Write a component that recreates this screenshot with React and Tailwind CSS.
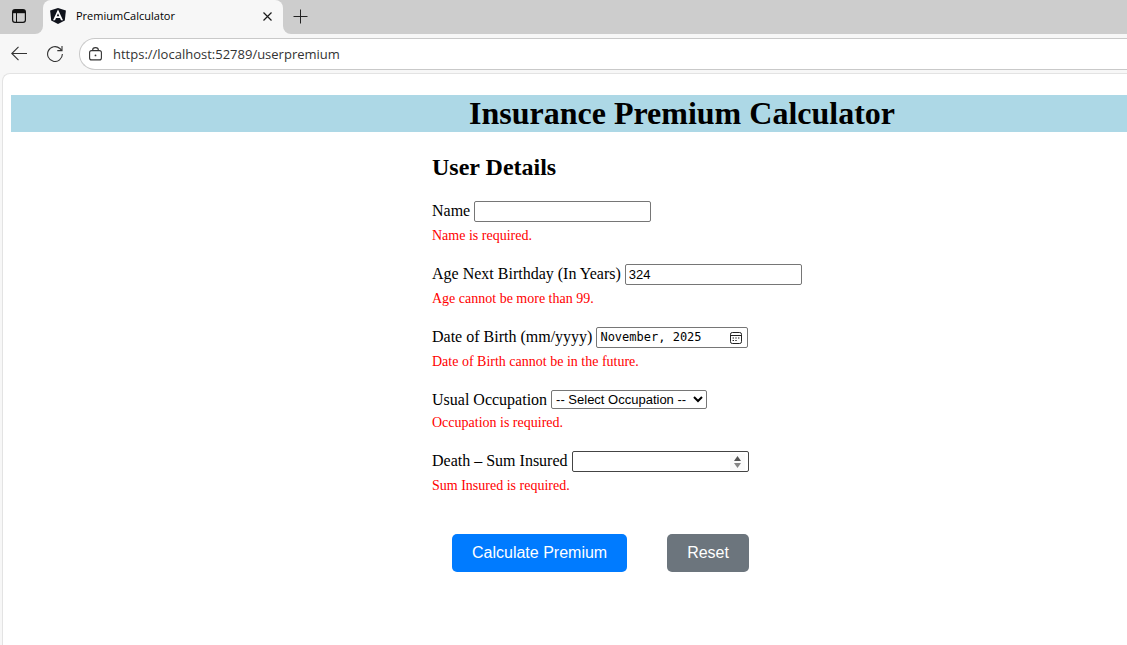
import React from "react";

const inputBase =
  "h-[21px] w-[177px] rounded-[2px] border border-[#767676] bg-white px-[3px] font-['Liberation_Sans',Arial,sans-serif] text-[13px] leading-[15px] text-black outline-none";

function Field({ id, label, error, children }) {
  return (
    <div className="mb-5">
      <div className="flex items-start gap-1">
        <label htmlFor={id} className="text-base leading-[19px] whitespace-nowrap">
          {label}
        </label>
        {children}
      </div>
      <p className="mt-[5px] text-sm leading-[17px] text-[#ff0000]">{error}</p>
    </div>
  );
}

function AngularLogo() {
  return (
    <svg width="16" height="16" viewBox="0 0 16 16" aria-hidden="true">
      <path d="M8 0 L15.9 2.6 L14.8 12.6 L8 16 L1.2 12.6 L0.1 2.6 Z" fill="#10131c" />
      <path
        d="M8 1.5 L3 12.3 H5 L6 9.9 H10 L11 12.3 H13 Z M8 5.2 L9.3 8.3 H6.7 Z"
        fill="#fff"
        fillRule="evenodd"
      />
    </svg>
  );
}

function TabStrip() {
  return (
    <div className="flex h-[34px] bg-[#f7f7f7]">
      <div className="flex w-[43px] items-center rounded-br-lg bg-[#cdcdcd] pb-[2px] pl-3">
        <button type="button" aria-label="Tab actions">
          <svg className="block" width="14" height="14" viewBox="0 0 14 14" fill="none" stroke="#111">
            <rect x="0.6" y="0.6" width="12.8" height="12.8" rx="2.4" strokeWidth="1.2" />
            <path d="M1 2.6 H13" strokeWidth="3.2" />
            <path d="M4.5 4 V13" strokeWidth="1" />
          </svg>
        </button>
      </div>
      <div className="bg-[#cdcdcd]">
        <div className="flex h-[34px] w-[240px] items-center rounded-t-lg bg-[#f7f7f7] pr-[11px] pb-[2px] pl-[7px]">
          <AngularLogo />
          <span className="ml-[10px] flex-1 font-['Open_Sans','Noto_Sans',sans-serif] text-[11px] leading-4 text-black">
            PremiumCalculator
          </span>
          <button type="button" aria-label="Close tab">
            <svg className="block" width="9" height="9" viewBox="0 0 9 9" stroke="#1b1b1b" strokeWidth="1.2">
              <path d="M0.5 0.5 L8.5 8.5 M8.5 0.5 L0.5 8.5" />
            </svg>
          </button>
        </div>
      </div>
      <div className="flex flex-1 items-center rounded-bl-lg bg-[#cdcdcd] pb-[2px] pl-[10px]">
        <button type="button" aria-label="New tab">
          <svg className="block" width="15" height="15" viewBox="0 0 15 15" stroke="#222" strokeWidth="1">
            <path d="M7.5 0.5 V14.5 M0.5 7.5 H14.5" />
          </svg>
        </button>
      </div>
    </div>
  );
}

function Toolbar() {
  return (
    <div className="flex items-center bg-[#f7f7f7] pt-1 pb-[3px] pl-[11px]">
      <button type="button" aria-label="Back">
        <svg className="block" width="16" height="16" viewBox="0 0 16 16" fill="none" stroke="#333" strokeWidth="1.1">
          <path d="M7.5 0.8 L0.8 7.5 L7.5 14.2 M0.8 7.5 H16" />
        </svg>
      </button>
      <button type="button" aria-label="Refresh" className="ml-5">
        <svg className="block" width="16" height="16" viewBox="0 0 16 16" fill="none" stroke="#333" strokeWidth="1.1">
          <path d="M15.4 8 A7.4 7.4 0 1 1 12.9 2.5 L14.8 4.4" />
          <path d="M15 0 V4.6 H10.3" />
        </svg>
      </button>
      <div className="ml-4 flex h-8 flex-1 items-center rounded-l-full border border-r-0 border-[#c9c9c9] bg-white pl-[9px]">
        <svg className="block" width="13" height="14" viewBox="0 0 13 14" fill="none" stroke="#333" strokeWidth="1.1">
          <rect x="0.6" y="3.6" width="11.8" height="9.3" rx="2" />
          <path d="M3.6 3.6 V3.2 A2.9 2.6 0 0 1 9.4 3.2 V3.6" />
          <circle cx="6.5" cy="8.4" r="0.9" fill="#333" stroke="none" />
        </svg>
        <input
          type="text"
          aria-label="Address"
          defaultValue="https://localhost:52789/userpremium"
          className="ml-[11px] flex-1 bg-transparent font-['Open_Sans','Noto_Sans',sans-serif] text-[13px] leading-5 text-[#333] outline-none"
        />
      </div>
    </div>
  );
}

export default function App() {
  return (
    <div className="flex min-h-screen flex-col overflow-hidden bg-[#f7f7f7]">
      <TabStrip />
      <Toolbar />
      <main className="ml-[2px] flex-1 rounded-tl-lg border-t border-l border-[#e3e3e3] bg-white pt-[21px] pl-2 font-['Liberation_Serif','Times_New_Roman',serif] text-black">
        <h1 className="bg-[#add8e6] pl-[226px] text-center text-[32px] leading-[37px] font-bold">
          Insurance Premium Calculator
        </h1>
        <div className="pl-[226px]">
          <form className="mx-auto max-w-[500px]" onSubmit={(e) => e.preventDefault()}>
            <h2 className="mt-[22px] mb-5 text-2xl leading-[27px] font-bold">User Details</h2>
            <Field id="name" label="Name" error="Name is required.">
              <input id="name" type="text" className={inputBase} />
            </Field>
            <Field id="age" label="Age Next Birthday (In Years)" error="Age cannot be more than 99.">
              <input id="age" type="text" inputMode="numeric" defaultValue="324" className={inputBase} />
            </Field>
            <Field id="dob" label="Date of Birth (mm/yyyy)" error="Date of Birth cannot be in the future.">
              <div className="flex h-[21px] w-[152px] items-center rounded-[2px] border border-[#767676] bg-white pr-[5px] pl-[3px]">
                <input
                  id="dob"
                  type="text"
                  defaultValue="November, 2025"
                  className="min-w-0 flex-1 bg-transparent font-['DejaVu_Sans_Mono',monospace] text-xs leading-[15px] outline-none"
                />
                <button type="button" aria-label="Choose month">
                  <svg className="block" width="12" height="12" viewBox="0 0 12 12" fill="none" stroke="#222">
                    <rect x="0.5" y="0.5" width="11" height="11" rx="1.8" />
                    <path d="M0.5 3.5 H11.5" />
                    <path d="M5.3 6 H6.7 M8 6 H9.4 M2.6 8.5 H4 M5.3 8.5 H6.7 M2.6 6 H4" strokeWidth="1.2" />
                  </svg>
                </button>
              </div>
            </Field>
            <Field id="occupation" label="Usual Occupation" error="Occupation is required.">
              <select
                id="occupation"
                className="h-[19px] w-[156px] rounded-[2px] border border-[#767676] bg-white font-['Liberation_Sans',Arial,sans-serif] text-[13px] leading-[15px] outline-none"
              >
                <option>-- Select Occupation --</option>
              </select>
            </Field>
            <Field id="sum" label="Death – Sum Insured" error="Sum Insured is required.">
              <div className="flex h-[21px] w-[177px] items-center rounded-[2px] border border-[#444] bg-white pr-[3px] pl-[3px]">
                <input
                  id="sum"
                  type="text"
                  inputMode="numeric"
                  className="min-w-0 flex-1 bg-transparent font-['Liberation_Sans',Arial,sans-serif] text-[13px] leading-[15px] outline-none"
                />
                <span className="flex w-[15px] flex-col items-center gap-[2px] bg-[#fafafa] py-[2px]">
                  <button type="button" aria-label="Increase">
                    <svg className="block" width="7" height="5" viewBox="0 0 7 5">
                      <path d="M3.5 0 L7 5 H0 Z" fill="#555" />
                    </svg>
                  </button>
                  <button type="button" aria-label="Decrease">
                    <svg className="block" width="7" height="5" viewBox="0 0 7 5">
                      <path d="M3.5 5 L7 0 H0 Z" fill="#858585" />
                    </svg>
                  </button>
                </span>
              </div>
            </Field>
            <div className="mt-10 flex gap-10 px-5 pb-10 font-['Liberation_Sans',Arial,sans-serif] text-base leading-[18px] text-white">
              <button type="submit" className="rounded-[5px] bg-[#007bff] px-5 py-[10px]">
                Calculate Premium
              </button>
              <button type="reset" className="rounded-[5px] bg-[#6c757d] px-5 py-[10px]">
                Reset
              </button>
            </div>
          </form>
        </div>
      </main>
    </div>
  );
}
